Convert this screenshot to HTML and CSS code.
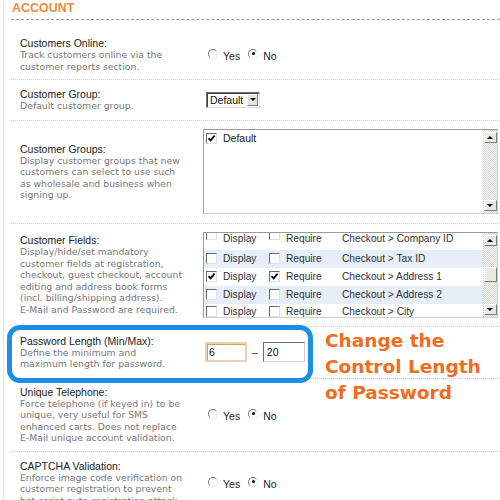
FILE: index.html
```html
<!DOCTYPE html>
<html>
<head>
<meta charset="utf-8">
<link rel="stylesheet" href="styles.css">
</head>
<body>
<div class="panel">
  <div class="heading">ACCOUNT</div>

  <div class="row r1">
    <div class="label">
      <div class="title">Customers Online:</div>
      <div class="desc">Track customers online via the<br>customer reports section.</div>
    </div>
    <div class="ctrl">
      <div class="radios">
        <span class="opt"><span class="radio"></span>Yes</span>
        <span class="opt"><span class="radio on"></span>No</span>
      </div>
    </div>
  </div>

  <div class="row r2">
    <div class="label">
      <div class="title">Customer Group:</div>
      <div class="desc">Default customer group.</div>
    </div>
    <div class="ctrl">
      <div class="select"><span class="sel-text">Default</span><span class="sel-btn"><span class="tri-down"></span></span></div>
    </div>
  </div>

  <div class="row r3">
    <div class="label">
      <div class="title">Customer Groups:</div>
      <div class="desc">Display customer groups that new<br>customers can select to use such<br>as wholesale and business when<br>signing up.</div>
    </div>
    <div class="ctrl">
      <div class="box groups">
        <div class="box-body">
          <div class="grp-item"><span class="cb on"><svg viewBox="0 0 9 9" width="9" height="9"><path d="M1.5 4.2 L3.6 6.4 L7.6 1.6" fill="none" stroke="#000" stroke-width="1.7"/></svg></span>Default</div>
        </div>
        <div class="sb">
          <span class="sbtn"><span class="tri-up"></span></span>
          <span class="sbtn"><span class="tri-down"></span></span>
        </div>
      </div>
    </div>
  </div>

  <div class="row r4">
    <div class="label">
      <div class="title">Customer Fields:</div>
      <div class="desc">Display/hide/set mandatory<br>customer fields at registration,<br>checkout, guest checkout, account<br>editing and address book forms<br>(incl. billing/shipping address).<br>E-Mail and Password are required.</div>
    </div>
    <div class="ctrl">
      <div class="box fields">
        <div class="box-body list">
          <div class="frow first">
            <span class="c1"><span class="cb cut"></span>Display</span>
            <span class="c2"><span class="cb cut"></span>Require</span>
            <span class="c3">Checkout &gt; Company ID</span>
          </div>
          <div class="frow alt">
            <span class="c1"><span class="cb"></span>Display</span>
            <span class="c2"><span class="cb"></span>Require</span>
            <span class="c3">Checkout &gt; Tax ID</span>
          </div>
          <div class="frow">
            <span class="c1"><span class="cb on"><svg viewBox="0 0 9 9" width="9" height="9"><path d="M1.5 4.2 L3.6 6.4 L7.6 1.6" fill="none" stroke="#000" stroke-width="1.7"/></svg></span>Display</span>
            <span class="c2"><span class="cb on"><svg viewBox="0 0 9 9" width="9" height="9"><path d="M1.5 4.2 L3.6 6.4 L7.6 1.6" fill="none" stroke="#000" stroke-width="1.7"/></svg></span>Require</span>
            <span class="c3">Checkout &gt; Address 1</span>
          </div>
          <div class="frow alt">
            <span class="c1"><span class="cb"></span>Display</span>
            <span class="c2"><span class="cb"></span>Require</span>
            <span class="c3">Checkout &gt; Address 2</span>
          </div>
          <div class="frow last">
            <span class="c1"><span class="cb"></span>Display</span>
            <span class="c2"><span class="cb"></span>Require</span>
            <span class="c3">Checkout &gt; City</span>
          </div>
        </div>
        <div class="sb">
          <span class="sbtn"><span class="tri-up"></span></span>
          <span class="thumb"></span>
          <span class="sbtn"><span class="tri-down"></span></span>
        </div>
      </div>
    </div>
  </div>

  <div class="row r5">
    <div class="label">
      <div class="title">Password Length (Min/Max):</div>
      <div class="desc">Define the minimum and<br>maximum length for password.</div>
    </div>
    <div class="ctrl pwctrl">
      <span class="pw focus">6</span>
      <span class="dash">–</span>
      <span class="pw">20</span>
    </div>
  </div>

  <div class="row r6">
    <div class="label">
      <div class="title">Unique Telephone:</div>
      <div class="desc">Force telephone (if keyed in) to be<br>unique, very useful for SMS<br>enhanced carts. Does not replace<br>E-Mail unique account validation.</div>
    </div>
    <div class="ctrl">
      <div class="radios">
        <span class="opt"><span class="radio"></span>Yes</span>
        <span class="opt"><span class="radio on"></span>No</span>
      </div>
    </div>
  </div>

  <div class="row r7">
    <div class="label">
      <div class="title">CAPTCHA Validation:</div>
      <div class="desc">Enforce image code verification on<br>customer registration to prevent<br>bot script auto-registration attack</div>
    </div>
    <div class="ctrl">
      <div class="radios">
        <span class="opt"><span class="radio"></span>Yes</span>
        <span class="opt"><span class="radio on"></span>No</span>
      </div>
    </div>
  </div>
</div>

<div class="highlight"></div>
<div class="note">Change the<br>Control Length<br>of Password</div>
</body>
</html>
```
FILE: styles.css
```css
html, body {
  margin: 0;
  padding: 0;
  background: #fff;
  width: 500px;
  height: 500px;
  overflow: hidden;
}
body {
  font-family: "Liberation Sans", Arial, sans-serif;
  color: #222;
  position: relative;
}
.panel {
  margin-left: 3px;
  border-left: 1px solid #e2e2e2;
  padding-left: 7px;
  min-height: 520px;
}
.heading {
  font-weight: bold;
  font-size: 12.5px;
  line-height: 15px;
  color: #f08a3a;
  padding-top: 1px;
  padding-bottom: 3px;
  padding-left: 1px;
  border-bottom: 1px dashed #9a9a9a;
}
.row {
  display: flex;
  align-items: center;
  border-bottom: 1px dotted #cfcfcf;
  padding: 8px 0;
}
.r1 { padding: 17px 0 7px; }
.r3 { padding: 8.5px 0; }
.r6 { padding: 7px 0; }
.label {
  width: 192px;
  flex: none;
  padding-left: 9px;
  box-sizing: border-box;
  white-space: nowrap;
}
.title {
  font-size: 10.5px;
  line-height: 12px;
  color: #222;
}
.desc {
  font-family: "DejaVu Sans", Verdana, sans-serif;
  font-size: 9.3px;
  line-height: 11.5px;
  color: #777;
}
.ctrl {
  flex: 1;
  display: flex;
  align-items: center;
  font-size: 10px;
  color: #222;
}
.radios {
  display: flex;
  align-items: center;
  margin-left: 5px;
  gap: 8px;
}
.opt {
  display: inline-flex;
  align-items: center;
  font-size: 10.5px;
  position: relative;
  top: 1px;
}
.radio {
  width: 8px;
  height: 8px;
  border-radius: 50%;
  border: 1px solid;
  border-color: #7a7a7a #e8e8e8 #e8e8e8 #7a7a7a;
  background: #fff;
  margin-right: 5px;
  position: relative;
  top: -2px;
}
.radio.on::after {
  content: "";
  position: absolute;
  left: 2.5px;
  top: 2.5px;
  width: 3px;
  height: 3px;
  border-radius: 50%;
  background: #000;
}
.select {
  margin-left: 3px;
  width: 54px;
  height: 16px;
  box-sizing: border-box;
  border: 1px solid;
  border-color: #6e6e6e #dcdcdc #dcdcdc #6e6e6e;
  box-shadow: inset 1px 1px 0 #404040;
  display: flex;
  align-items: center;
  justify-content: space-between;
  padding-left: 3px;
  font-size: 10.5px;
  color: #111;
}
.sel-btn {
  width: 11px;
  height: 12px;
  background: #e4e2dc;
  border: 1px solid;
  border-color: #fff #808080 #808080 #fff;
  box-sizing: border-box;
  display: flex;
  align-items: center;
  justify-content: center;
  margin-right: 1px;
}
.tri-down, .tri-up {
  width: 0;
  height: 0;
  border-left: 3px solid transparent;
  border-right: 3px solid transparent;
}
.tri-down { border-top: 3px solid #000; }
.tri-up { border-bottom: 3px solid #000; }
.box {
  width: 295px;
  box-sizing: border-box;
  border: 1px solid;
  border-color: #9a9a9a #d0d0d0 #d0d0d0 #9a9a9a;
  display: flex;
  background: #fff;
  overflow: hidden;
}
.groups { height: 85px; }
.fields { height: 86px; }
.box-body {
  flex: 1;
  position: relative;
  overflow: hidden;
}
.grp-item {
  display: flex;
  align-items: center;
  padding: 2px 0 0 2px;
  font-size: 10.5px;
  line-height: 12px;
}
.cb {
  width: 11px;
  height: 11px;
  box-sizing: border-box;
  border: 1px solid;
  border-color: #6a6a6a #e0e0e0 #e0e0e0 #6a6a6a;
  background: #fff;
  display: inline-flex;
  align-items: center;
  justify-content: center;
  margin-right: 6px;
  flex: none;
}
.cb.cut {
  height: 7px;
  border-top: none;
  align-self: flex-start;
}
.list { margin-top: -1px; }
.frow {
  height: 18px;
  display: flex;
  align-items: center;
  padding-left: 2px;
  font-size: 10.2px;
  color: #333;
}
.frow.first { align-items: flex-start; }
.frow.first .c1, .frow.first .c2 { align-items: flex-start; }
.frow.first .c3, .frow.first .c1, .frow.first .c2 { padding-top: 1px; }
.frow.last { align-items: flex-start; padding-top: 2px; box-sizing: border-box; }
.frow.alt { background: #e6eef7; }
.c1 { width: 63px; display: flex; align-items: center; }
.c2 { width: 73px; display: flex; align-items: center; }
.c3 { flex: 1; }
.sb {
  width: 14px;
  flex: none;
  display: flex;
  flex-direction: column;
  justify-content: space-between;
  align-items: center;
  padding: 2px 0;
  background: repeating-conic-gradient(#d8d6d0 0 25%, #fbfbfb 0 50%) 0 0 / 2px 2px;
}
.sbtn, .thumb {
  width: 13px;
  height: 11px;
  box-sizing: border-box;
  background: #ebe9e4;
  border: 1px solid;
  border-color: #fff #7a7a7a #7a7a7a #fff;
  display: flex;
  align-items: center;
  justify-content: center;
}
.thumb { height: 15px; margin-top: 8px; margin-bottom: 8px; }
.pwctrl { padding-left: 2px; }
.pw {
  width: 42px;
  height: 20px;
  box-sizing: border-box;
  border: 1px solid;
  border-color: #6a6a6a #cfcfcf #cfcfcf #6a6a6a;
  font-size: 10.5px;
  line-height: 18px;
  padding-left: 3px;
  color: #111;
}
.pw.focus {
  border: 2px solid #ecd2a8;
  box-shadow: inset 1px 1px 0 #c9a36a;
  line-height: 16px;
  padding-left: 2px;
}
.dash {
  margin: 0 5px;
  font-size: 10.5px;
  color: #333;
}
.highlight {
  position: absolute;
  left: 7px;
  top: 325px;
  width: 306px;
  height: 58px;
  box-sizing: border-box;
  border: 5px solid #1b8ee6;
  border-radius: 13px;
}
.note {
  position: absolute;
  left: 325px;
  top: 328px;
  font-family: "DejaVu Sans", Verdana, sans-serif;
  font-weight: bold;
  font-size: 18.5px;
  line-height: 26px;
  color: #f26c1e;
  white-space: nowrap;
}
```
